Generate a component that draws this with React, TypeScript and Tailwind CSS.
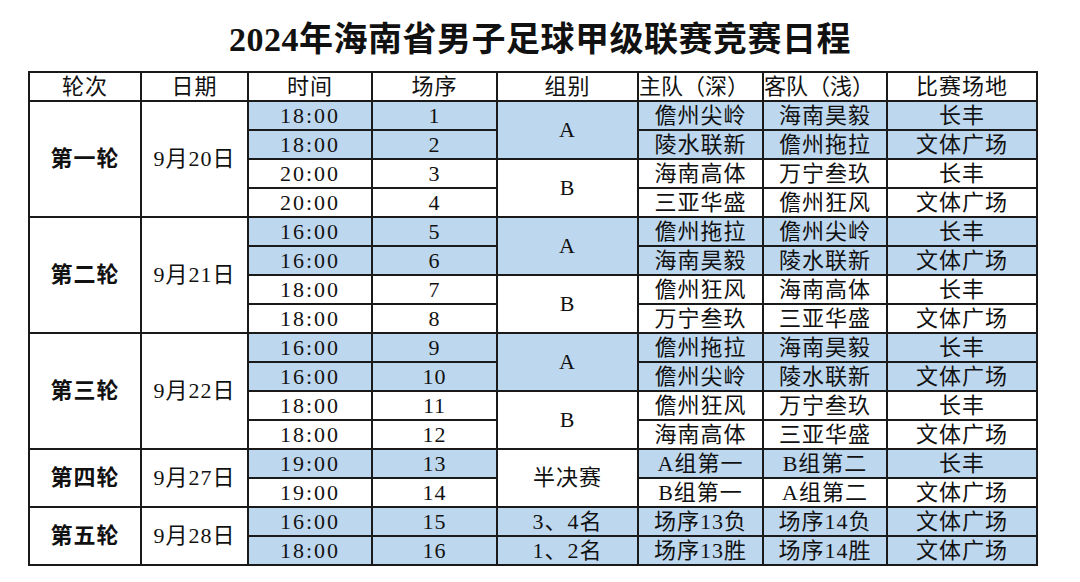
import React from 'react';

type Match = {
  time: string;
  no: number;
  home: string;
  away: string;
  venue: string;
  shaded: boolean;
};

type Group = { name: string; shaded: boolean; matches: Match[] };
type Round = { name: string; date: string; groups: Group[] };

const rounds: Round[] = [
  {
    name: '第一轮',
    date: '9月20日',
    groups: [
      {
        name: 'A',
        shaded: true,
        matches: [
          { time: '18:00', no: 1, home: '儋州尖岭', away: '海南昊毅', venue: '长丰', shaded: true },
          { time: '18:00', no: 2, home: '陵水联新', away: '儋州拖拉', venue: '文体广场', shaded: true },
        ],
      },
      {
        name: 'B',
        shaded: false,
        matches: [
          { time: '20:00', no: 3, home: '海南高体', away: '万宁叁玖', venue: '长丰', shaded: false },
          { time: '20:00', no: 4, home: '三亚华盛', away: '儋州狂风', venue: '文体广场', shaded: false },
        ],
      },
    ],
  },
  {
    name: '第二轮',
    date: '9月21日',
    groups: [
      {
        name: 'A',
        shaded: true,
        matches: [
          { time: '16:00', no: 5, home: '儋州拖拉', away: '儋州尖岭', venue: '长丰', shaded: true },
          { time: '16:00', no: 6, home: '海南昊毅', away: '陵水联新', venue: '文体广场', shaded: true },
        ],
      },
      {
        name: 'B',
        shaded: false,
        matches: [
          { time: '18:00', no: 7, home: '儋州狂风', away: '海南高体', venue: '长丰', shaded: false },
          { time: '18:00', no: 8, home: '万宁叁玖', away: '三亚华盛', venue: '文体广场', shaded: false },
        ],
      },
    ],
  },
  {
    name: '第三轮',
    date: '9月22日',
    groups: [
      {
        name: 'A',
        shaded: true,
        matches: [
          { time: '16:00', no: 9, home: '儋州拖拉', away: '海南昊毅', venue: '长丰', shaded: true },
          { time: '16:00', no: 10, home: '儋州尖岭', away: '陵水联新', venue: '文体广场', shaded: true },
        ],
      },
      {
        name: 'B',
        shaded: false,
        matches: [
          { time: '18:00', no: 11, home: '儋州狂风', away: '万宁叁玖', venue: '长丰', shaded: false },
          { time: '18:00', no: 12, home: '海南高体', away: '三亚华盛', venue: '文体广场', shaded: false },
        ],
      },
    ],
  },
  {
    name: '第四轮',
    date: '9月27日',
    groups: [
      {
        name: '半决赛',
        shaded: false,
        matches: [
          { time: '19:00', no: 13, home: 'A组第一', away: 'B组第二', venue: '长丰', shaded: true },
          { time: '19:00', no: 14, home: 'B组第一', away: 'A组第二', venue: '文体广场', shaded: false },
        ],
      },
    ],
  },
];

const finals: Match[] = [
  { time: '16:00', no: 15, home: '场序13负', away: '场序14负', venue: '文体广场', shaded: true },
  { time: '18:00', no: 16, home: '场序13胜', away: '场序14胜', venue: '文体广场', shaded: true },
];
const finalGroups = ['3、4名', '1、2名'];

const cell = 'border-2 border-[#1a1a1a] text-center align-middle leading-none p-0 h-[29px]';
const blue = 'bg-[#bdd7ee]';
const time = 'tracking-[2px]';

const App: React.FC = () => {
  return (
    <div
      className="w-[1080px] h-[582px] bg-white text-[#111] pt-[22px]"
      style={{ fontFamily: '"Liberation Serif", "Noto Sans CJK SC", serif' }}
    >
      <h1 className="text-center text-[34px] font-bold leading-[36px] tracking-[0.5px]">
        2024年海南省男子足球甲级联赛竞赛日程
      </h1>

      <table className="ml-[28px] mt-[13px] w-[1008px] table-fixed border-collapse text-[22px] tracking-[1px]">
        <colgroup>
          <col className="w-[112px]" />
          <col className="w-[107px]" />
          <col className="w-[124px]" />
          <col className="w-[125px]" />
          <col className="w-[141px]" />
          <col className="w-[125px]" />
          <col className="w-[124px]" />
          <col className="w-[150px]" />
        </colgroup>
        <thead>
          <tr>
            {['轮次', '日期', '时间', '场序', '组别'].map((h) => (
              <th key={h} className={`${cell} font-normal h-[28px]`}>
                {h}
              </th>
            ))}
            <th className={`${cell} font-normal text-left whitespace-nowrap tracking-normal`}>主队（深）</th>
            <th className={`${cell} font-normal text-left whitespace-nowrap tracking-normal`}>客队（浅）</th>
            <th className={`${cell} font-normal`}>比赛场地</th>
          </tr>
        </thead>
        <tbody>
          {rounds.map((r) =>
            r.groups.flatMap((g, gi) =>
              g.matches.map((m, mi) => (
                <tr key={m.no}>
                  {gi === 0 && mi === 0 && (
                    <>
                      <td rowSpan={r.groups.length * 2} className={`${cell} font-bold`}>
                        {r.name}
                      </td>
                      <td rowSpan={r.groups.length * 2} className={cell}>
                        {r.date}
                      </td>
                    </>
                  )}
                  <td className={`${cell} ${time} ${m.shaded ? blue : ''}`}>{m.time}</td>
                  <td className={`${cell} ${m.shaded ? blue : ''}`}>{m.no}</td>
                  {mi === 0 && (
                    <td rowSpan={2} className={`${cell} ${g.shaded ? blue : ''}`}>
                      {g.name}
                    </td>
                  )}
                  <td className={`${cell} ${m.shaded ? blue : ''}`}>{m.home}</td>
                  <td className={`${cell} ${m.shaded ? blue : ''}`}>{m.away}</td>
                  <td className={`${cell} ${m.shaded ? blue : ''}`}>{m.venue}</td>
                </tr>
              ))
            )
          )}
          {finals.map((m, i) => (
            <tr key={m.no}>
              {i === 0 && (
                <>
                  <td rowSpan={2} className={`${cell} font-bold`}>第五轮</td>
                  <td rowSpan={2} className={cell}>9月28日</td>
                </>
              )}
              <td className={`${cell} ${time} ${blue}`}>{m.time}</td>
              <td className={`${cell} ${blue}`}>{m.no}</td>
              <td className={`${cell} ${blue}`}>{finalGroups[i]}</td>
              <td className={`${cell} ${blue}`}>{m.home}</td>
              <td className={`${cell} ${blue}`}>{m.away}</td>
              <td className={`${cell} ${blue}`}>{m.venue}</td>
            </tr>
          ))}
        </tbody>
      </table>
    </div>
  );
};

export default App;
